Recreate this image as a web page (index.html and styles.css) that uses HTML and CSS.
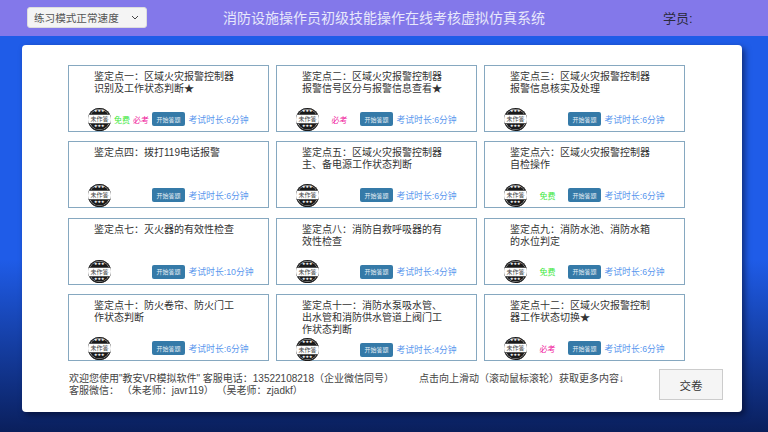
FILE: index.html
```html
<!DOCTYPE html>
<html lang="zh-CN">
<head>
    <meta charset="UTF-8">
    <meta name="viewport" content="width=device-width, initial-scale=1.0">
    <title>消防设施操作员初级技能操作在线考核虚拟仿真系统</title>
    <link rel="stylesheet" href="styles.css">
</head>
<body>
    <header class="topbar">
        <div class="mode-select">
            <span>练习模式正常速度</span>
            <svg class="chevron" width="8" height="5" viewBox="0 0 8 5"><path d="M1 1l3 3 3-3" fill="none" stroke="#444" stroke-width="1"/></svg>
        </div>
        <h1>消防设施操作员初级技能操作在线考核虚拟仿真系统</h1>
        <div class="student">学员:</div>
    </header>

    <main class="panel">
        <div class="card-grid">
            <div class="card">
                <p class="card-title">鉴定点一&#xFF1A;区域火灾报警控制器<br>识别及工作状态判断★</p>
                <div class="card-foot">
                    <div class="stamp"><span>未作答</span></div>
                    <div class="tags"><span class="free">免费</span><span class="must">必考</span></div>
                    <button class="start">开始答题</button>
                    <span class="duration">考试时长:6分钟</span>
                </div>
            </div>
            <div class="card">
                <p class="card-title">鉴定点二&#xFF1A;区域火灾报警控制器<br>报警信号区分与报警信息查看★</p>
                <div class="card-foot">
                    <div class="stamp"><span>未作答</span></div>
                    <div class="tags"><span class="must">必考</span></div>
                    <button class="start">开始答题</button>
                    <span class="duration">考试时长:6分钟</span>
                </div>
            </div>
            <div class="card">
                <p class="card-title">鉴定点三&#xFF1A;区域火灾报警控制器<br>报警信息核实及处理</p>
                <div class="card-foot">
                    <div class="stamp"><span>未作答</span></div>
                    <div class="tags"></div>
                    <button class="start">开始答题</button>
                    <span class="duration">考试时长:6分钟</span>
                </div>
            </div>
            <div class="card">
                <p class="card-title">鉴定点四&#xFF1A;拨打119电话报警</p>
                <div class="card-foot">
                    <div class="stamp"><span>未作答</span></div>
                    <div class="tags"></div>
                    <button class="start">开始答题</button>
                    <span class="duration">考试时长:6分钟</span>
                </div>
            </div>
            <div class="card">
                <p class="card-title">鉴定点五&#xFF1A;区域火灾报警控制器<br>主、备电源工作状态判断</p>
                <div class="card-foot">
                    <div class="stamp"><span>未作答</span></div>
                    <div class="tags"></div>
                    <button class="start">开始答题</button>
                    <span class="duration">考试时长:6分钟</span>
                </div>
            </div>
            <div class="card">
                <p class="card-title">鉴定点六&#xFF1A;区域火灾报警控制器<br>自检操作</p>
                <div class="card-foot">
                    <div class="stamp"><span>未作答</span></div>
                    <div class="tags"><span class="free">免费</span></div>
                    <button class="start">开始答题</button>
                    <span class="duration">考试时长:6分钟</span>
                </div>
            </div>
            <div class="card">
                <p class="card-title">鉴定点七&#xFF1A;灭火器的有效性检查</p>
                <div class="card-foot">
                    <div class="stamp"><span>未作答</span></div>
                    <div class="tags"></div>
                    <button class="start">开始答题</button>
                    <span class="duration">考试时长:10分钟</span>
                </div>
            </div>
            <div class="card">
                <p class="card-title">鉴定点八&#xFF1A;消防自救呼吸器的有<br>效性检查</p>
                <div class="card-foot">
                    <div class="stamp"><span>未作答</span></div>
                    <div class="tags"></div>
                    <button class="start">开始答题</button>
                    <span class="duration">考试时长:4分钟</span>
                </div>
            </div>
            <div class="card">
                <p class="card-title">鉴定点九&#xFF1A;消防水池、消防水箱<br>的水位判定</p>
                <div class="card-foot">
                    <div class="stamp"><span>未作答</span></div>
                    <div class="tags"><span class="free">免费</span></div>
                    <button class="start">开始答题</button>
                    <span class="duration">考试时长:6分钟</span>
                </div>
            </div>
            <div class="card">
                <p class="card-title">鉴定点十&#xFF1A;防火卷帘、防火门工<br>作状态判断</p>
                <div class="card-foot">
                    <div class="stamp"><span>未作答</span></div>
                    <div class="tags"></div>
                    <button class="start">开始答题</button>
                    <span class="duration">考试时长:6分钟</span>
                </div>
            </div>
            <div class="card">
                <p class="card-title">鉴定点十一&#xFF1A;消防水泵吸水管、<br>出水管和消防供水管道上阀门工<br>作状态判断</p>
                <div class="card-foot">
                    <div class="stamp"><span>未作答</span></div>
                    <div class="tags"></div>
                    <button class="start">开始答题</button>
                    <span class="duration">考试时长:4分钟</span>
                </div>
            </div>
            <div class="card">
                <p class="card-title">鉴定点十二&#xFF1A;区域火灾报警控制<br>器工作状态切换★</p>
                <div class="card-foot">
                    <div class="stamp"><span>未作答</span></div>
                    <div class="tags"><span class="must">必考</span></div>
                    <button class="start">开始答题</button>
                    <span class="duration">考试时长:6分钟</span>
                </div>
            </div>
        </div>

        <footer class="panel-foot">
            <p class="contact">欢迎您使用"教安VR模拟软件" 客服电话&#xFF1A;13522108218&#xFF08;企业微信同号&#xFF09;<br>客服微信&#xFF1A; &#xFF08;朱老师&#xFF1A;javr119&#xFF09; &#xFF08;吴老师&#xFF1A;zjadkf&#xFF09;</p>
            <p class="hint">点击向上滑动&#xFF08;滚动鼠标滚轮&#xFF09;获取更多内容↓</p>
            <button class="submit">交卷</button>
        </footer>
    </main>
</body>
</html>
```

FILE: styles.css
```css
* {
    box-sizing: border-box;
}

html, body {
    height: 432px;
    overflow: hidden;
}

body {
    margin: 0;
    font-family: "Liberation Sans", "Noto Sans CJK SC", sans-serif;
    background: linear-gradient(180deg, #1f5ce8 0%, #1f5ce8 60%, #0a1f5c 100%);
}

.topbar {
    display: flex;
    align-items: center;
    height: 36px;
    padding: 0 0 2px 27px;
    background-color: #8378ea;
}

.mode-select {
    display: flex;
    align-items: center;
    justify-content: space-between;
    width: 120px;
    height: 21px;
    padding: 0 7px 0 6px;
    background-color: #f4f4f4;
    border: 1px solid #ddd;
    border-radius: 3px;
    font-size: 10.6px;
    color: #555;
}

.topbar h1 {
    margin: 0 0 0 76px;
    width: 322px;
    font-size: 14px;
    font-weight: 400;
    color: #e8e8fb;
    white-space: nowrap;
}

.student {
    margin-left: 118px;
    font-size: 13px;
    color: #2a2a3a;
}

.panel {
    width: 720px;
    height: 367px;
    margin: 9px 0 0 22px;
    padding: 20px 46px 0;
    background-color: #fff;
    border-radius: 4px;
    box-shadow: 3px 3px 6px rgba(0, 0, 20, 0.5);
}

.card-grid {
    display: grid;
    grid-template-columns: repeat(3, 201px);
    grid-auto-rows: 67px;
    column-gap: 7px;
    row-gap: 9.4px;
}

.card {
    display: flex;
    flex-direction: column;
    padding: 5px 6px 0 19px;
    border: 1px solid #86a8c0;
}

.card-title {
    margin: 0 0 0 6px;
    font-size: 10px;
    line-height: 12px;
    color: #333;
    white-space: nowrap;
}

.card-foot {
    display: flex;
    align-items: center;
    margin: auto 0 0 0;
    height: 26px;
    padding-top: 2px;
}

/* round "not answered" seal: stars above and below a white band */
.stamp {
    flex: none;
    display: flex;
    flex-direction: column;
    align-items: center;
    justify-content: center;
    width: 23px;
    height: 23px;
    border-radius: 50%;
    background-color: #1a1a1a;
    box-shadow: inset 0 0 0 1px #1a1a1a, inset 0 0 0 1.4px #ccc;
    overflow: hidden;
}

.stamp::before,
.stamp::after {
    content: "★★★";
    height: 5px;
    font-size: 3px;
    line-height: 5px;
    letter-spacing: 0.5px;
    color: #fff;
}

.stamp span {
    flex: none;
    width: 100%;
    height: 10px;
    background-color: #fff;
    border-top: 0.5px solid #555;
    border-bottom: 0.5px solid #555;
    font-size: 6px;
    line-height: 9px;
    text-align: center;
    color: #444;
    white-space: nowrap;
}

.tags {
    flex: none;
    display: flex;
    justify-content: center;
    gap: 3px;
    width: 41px;
    font-size: 8px;
    white-space: nowrap;
}

.free {
    color: #3ce83c;
}

.must {
    color: #f0209c;
}

.start {
    flex: none;
    width: 33px;
    height: 14px;
    padding: 0;
    border: none;
    border-radius: 2px;
    background-color: #357aa8;
    font-family: inherit;
    font-size: 6px;
    color: #e6eef5;
}

.duration {
    margin-left: 3.5px;
    font-size: 8.8px;
    color: #5a97ee;
    white-space: nowrap;
}

.panel-foot {
    display: flex;
    align-items: flex-start;
    margin-top: 8px;
    padding-left: 1px;
}

.contact {
    flex: none;
    margin: 4px 0 0 0;
    width: 350px;
    font-size: 10px;
    line-height: 12px;
    color: #444;
    white-space: nowrap;
}

.hint {
    flex: none;
    margin: 4px 0 0 0;
    width: 240px;
    font-size: 10px;
    line-height: 12px;
    color: #444;
    white-space: nowrap;
}

.submit {
    flex: none;
    width: 64px;
    height: 31px;
    padding: 0;
    border: 1px solid #ccc;
    background-color: #f5f5f5;
    font-family: inherit;
    font-size: 11.5px;
    color: #333;
}
```
